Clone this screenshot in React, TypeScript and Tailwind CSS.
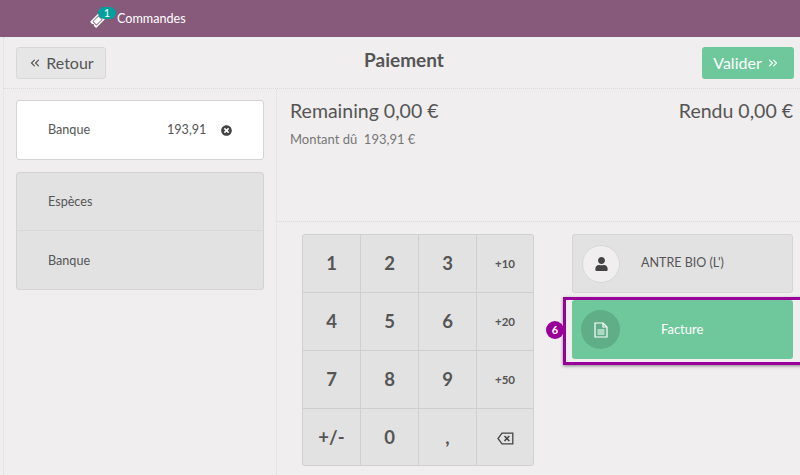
import { ChevronsLeft, ChevronsRight } from "lucide-react";
import { FaTicketAlt, FaTimesCircle, FaUser } from "react-icons/fa";

const keys = ["1", "2", "3", "+10", "4", "5", "6", "+20", "7", "8", "9", "+50", "+/-", "0", ",", "back"];

const Key = ({ label, index }: { label: string; index: number }) => {
  const small = label.length === 3 && label !== "+/-";
  return (
    <div
      className={`flex h-[58px] items-center justify-center border-[#cfcfcf] font-bold ${index % 4 !== 3 ? "border-r" : ""} ${index < 12 ? "border-b" : ""} ${small ? "text-[11.5px]" : "text-[18.5px]"}`}
    >
      {label === "back" ? (
        <svg width="17" height="13" viewBox="0 0 17 13" fill="none" stroke="#444" strokeWidth="1.3">
          <path d="M5 1.2h10.8v10.6H5L1 6.5z" />
          <path d="M7.5 4l4.8 5M12.3 4l-4.8 5" strokeWidth="1.6" />
        </svg>
      ) : (
        label
      )}
    </div>
  );
};

const App = () => {
  return (
    <div className="relative h-[475px] w-[800px] overflow-hidden bg-[#f0eeee] font-['Lato','Open_Sans',sans-serif] text-[#555555]">
      <header className="flex h-[37px] items-center bg-[#875a7b] pl-[91px] text-white">
        <div className="relative flex items-center">
          <FaTicketAlt className="mt-1 h-[13px] w-[13px] -rotate-45" />
          <span className="absolute left-[7px] top-[-2px] flex h-[12px] w-[18px] items-center justify-center rounded-full bg-[#00a09d] text-[11px] leading-none">
            1
          </span>
          <span className="ml-[13px] pt-[1px] text-[12.6px]">Commandes</span>
        </div>
      </header>

      <div className="ml-[3px] flex h-[438px] flex-col border-l border-dotted border-[#dcdcdc]">
        <div className="relative flex h-[52px] shrink-0 items-center justify-between border-b border-dotted border-[#dcdcdc] pl-[12px] pr-[6px]">
          <button className="flex h-[32px] w-[90px] items-center justify-center gap-[4px] rounded-[3px] border border-[#d8d8d8] bg-[#e6e6e6] text-[16px]">
            <ChevronsLeft className="h-[14px] w-[14px]" strokeWidth={2} />
            Retour
          </button>
          <h1 className="mb-[4px] text-[19px] font-bold text-[#555555]">Paiement</h1>
          <button className="flex h-[32px] w-[92px] items-center justify-center gap-[4px] rounded-[3px] bg-[#6ec89b] pr-[3px] text-[16px] text-white">
            Valider
            <ChevronsRight className="h-[14px] w-[14px]" strokeWidth={2} />
          </button>
        </div>

        <div className="flex flex-1">
          <aside className="w-[273px] shrink-0 border-r border-dotted border-[#dcdcdc] pl-[12px] pt-[11px]">
            <div className="flex h-[60px] w-[248px] items-center rounded-[3px] border border-[#d4d4d4] bg-white pl-[31px] text-[12.6px]">
              <span className="w-[42px]">Banque</span>
              <span className="ml-[77px] w-[38px] whitespace-nowrap">193,91</span>
              <FaTimesCircle className="ml-[16px] h-[11px] w-[11px] text-[#444444]" />
            </div>
            <div className="mt-[12px] w-[248px] rounded-[3px] border border-[#d4d4d4] bg-[#e2e2e2] text-[12.6px]">
              <div className="flex h-[58px] items-center border-b border-[#d8d8d8] pl-[31px] pt-[1px]">Espèces</div>
              <div className="flex h-[58px] items-center pl-[31px] pt-[2px]">Banque</div>
            </div>
          </aside>

          <main className="flex-1">
            <section className="flex h-[133px] justify-between border-b border-dotted border-[#dcdcdc] pl-[13px] pr-[7px] pt-[9px]">
              <div>
                <div className="text-[19.5px] leading-[26px]">Remaining 0,00 €</div>
                <div className="mt-[5px] text-[13px] leading-[20px] text-[#777777]">Montant dû&nbsp; 193,91 €</div>
              </div>
              <div className="text-[19.5px] leading-[26px]">Rendu 0,00 €</div>
            </section>

            <section className="flex pl-[25px] pt-[12px]">
              <div className="grid h-[232px] w-[232px] grid-cols-[58px_58px_58px_56px] overflow-hidden rounded-[3px] border border-[#d0d0d0] bg-[#e2e2e2]">
                {keys.map((key, i) => (
                  <Key key={key} label={key} index={i} />
                ))}
              </div>

              <div className="ml-[38px] flex w-[221px] flex-col gap-[7px]">
                <div className="flex h-[59px] items-center rounded-[3px] border border-[#d4d4d4] bg-[#e2e2e2] pl-[9px] text-[12.5px]">
                  <div className="flex h-[38px] w-[38px] items-center justify-center rounded-full border border-[#d8d8d8] bg-[#f0eeee]">
                    <FaUser className="h-[14px] w-[13px] text-[#444444]" />
                  </div>
                  <span className="ml-[21px]">ANTRE BIO (L')</span>
                </div>
                <div className="flex h-[59px] items-center rounded-[3px] bg-[#6ec89b] pl-[9px] text-[13px] text-white">
                  <div className="flex h-[39px] w-[39px] items-center justify-center rounded-full bg-[#5fae88]">
                    <svg width="14" height="16" viewBox="0 0 14 16" fill="none" stroke="white" strokeWidth="1.2">
                      <path d="M1 1h8l4 4v10H1z" />
                      <path d="M9 1v4h4M3.5 8h7M3.5 10h7M3.5 12h7" />
                    </svg>
                  </div>
                  <span className="ml-[41px]">Facture</span>
                </div>
              </div>
            </section>
          </main>
        </div>
      </div>

      {/* annotation over the Facture button */}
      <div className="absolute left-[563px] top-[297px] h-[68px] w-[240px] border-[3px] border-[#990099] shadow-[0_1px_3px_rgba(0,0,0,0.45)]" />
      <div className="absolute left-[546px] top-[321px] flex h-[18px] w-[18px] items-center justify-center rounded-full bg-[#990099] text-[11px] font-bold text-white">
        6
      </div>
    </div>
  );
};

export default App;
